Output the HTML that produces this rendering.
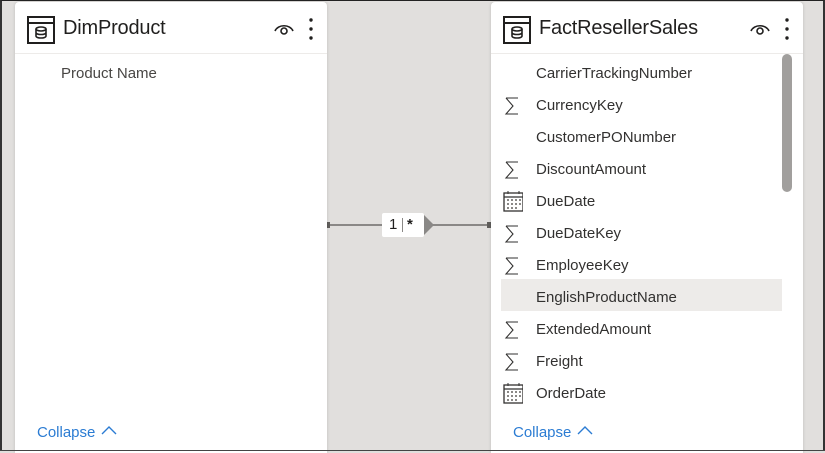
<!DOCTYPE html>
<html><head><meta charset="utf-8"><style>
*{margin:0;padding:0;box-sizing:border-box}
body{width:825px;height:451px;overflow:hidden;background:#e1dfdd;font-family:"Segoe UI","Liberation Sans",sans-serif;position:relative}
.frame{position:absolute;left:0;top:0;width:825px;height:451px;border:1px solid #222;border-bottom:0;border-left:2px solid #333;border-right:2px solid #333;pointer-events:none;z-index:10}
.card{position:absolute;top:2px;width:312px;height:451px;background:#fff;border-radius:4px 4px 0 0;box-shadow:0 0 3px rgba(0,0,0,.15)}
.hdr{height:52px;border-bottom:1px solid #edebe9;position:relative}
.title{position:absolute;left:48px;top:15px;font-size:20px;font-weight:normal;color:#201f1e;letter-spacing:-0.2px}
.ticon{position:absolute;left:12px;top:14px}
.eye{position:absolute;left:258px;top:19px}
.dots{position:absolute;left:293px;top:15px}
.row{position:absolute;height:32px;line-height:32px;font-size:15px;color:#323130}
.ic{position:absolute;left:-33px;top:0;width:20px;height:32px}
.collapse{position:absolute;left:22px;top:422px;font-size:15px;color:#2b7cd3}
.hl{position:absolute;left:10px;width:281px;height:32px;background:#edebe9}
.sb{position:absolute;left:291px;top:52px;width:10px;height:138px;background:#a19f9d;border-radius:5px}
</style></head><body>
<svg width="0" height="0" style="position:absolute"><defs>
<symbol id="tbl" viewBox="0 0 28 28"><rect x="1" y="1" width="26" height="26" fill="none" stroke="#201f1e" stroke-width="2"/><line x1="1" y1="7" x2="27" y2="7" stroke="#201f1e" stroke-width="2"/><ellipse cx="14" cy="13" rx="5" ry="2" fill="none" stroke="#201f1e" stroke-width="1.6"/><path d="M9 13v7c0 1.2 2.2 2 5 2s5-.8 5-2v-7M9 16.5c0 1.2 2.2 2 5 2s5-.8 5-2" fill="none" stroke="#201f1e" stroke-width="1.6"/></symbol>
<symbol id="sig" viewBox="0 0 20 32"><path d="M3 8h12M3 8l7 8-7 8h12" fill="none" stroke="#323130" stroke-width="1.1"/></symbol>
<symbol id="cal" viewBox="0 0 20 32"><rect x="1" y="7" width="19" height="18" fill="none" stroke="#323130" stroke-width="1.3"/><line x1="1" y1="11" x2="20" y2="11" stroke="#323130" stroke-width="1.3"/><line x1="5" y1="5" x2="5" y2="8" stroke="#323130"/><line x1="16" y1="5" x2="16" y2="8" stroke="#323130"/><g fill="#8a8886"><rect x="4" y="13" width="2" height="2"/><rect x="8" y="13" width="2" height="2"/><rect x="12" y="13" width="2" height="2"/><rect x="16" y="13" width="2" height="2"/><rect x="4" y="17" width="2" height="2"/><rect x="8" y="17" width="2" height="2"/><rect x="12" y="17" width="2" height="2"/><rect x="16" y="17" width="2" height="2"/><rect x="4" y="21" width="2" height="2"/><rect x="8" y="21" width="2" height="2"/><rect x="12" y="21" width="2" height="2"/></g></symbol>
<symbol id="eye" viewBox="0 0 22 16"><path d="M2 10c3-7 15-7 18 0" fill="none" stroke="#201f1e" stroke-width="1.6"/><circle cx="11" cy="10" r="3" fill="none" stroke="#201f1e" stroke-width="1.6"/></symbol>
<symbol id="dots" viewBox="0 0 6 24"><circle cx="3" cy="3" r="1.7" fill="#201f1e"/><circle cx="3" cy="12" r="1.7" fill="#201f1e"/><circle cx="3" cy="21" r="1.7" fill="#201f1e"/></symbol>
</defs></svg>

<div style="position:absolute;left:327px;top:224px;width:164px;height:2px;background:#8a8886"></div>
<div style="position:absolute;left:326px;top:222px;width:4px;height:6px;background:#605e5c"></div>
<div style="position:absolute;left:487px;top:222px;width:4px;height:6px;background:#605e5c"></div>
<div style="position:absolute;left:382px;top:213px;width:42px;height:24px;background:#fff;border-radius:2px;font-size:15px;line-height:24px;color:#201f1e"><span style="position:absolute;left:7px">1</span><span style="position:absolute;left:20px;top:5px;width:1px;height:14px;background:#8a8886"></span><span style="position:absolute;left:25px;font-weight:bold">*</span></div>
<div style="position:absolute;left:424px;top:215px;width:0;height:0;border-top:10px solid transparent;border-bottom:10px solid transparent;border-left:10px solid #8a8886"></div>

<div class="card" style="left:15px">
 <div class="hdr"><svg class="ticon" width="28" height="28"><use href="#tbl"/></svg><div class="title">DimProduct</div>
 <svg class="eye" width="22" height="16"><use href="#eye"/></svg><svg class="dots" width="6" height="24"><use href="#dots"/></svg></div>
 <div class="row" style="left:46px;top:56px;color:#484644">Product Name</div>
 <div class="collapse">Collapse <svg width="18" height="12" style="vertical-align:1px"><path d="M2 10l7-7 7 7" fill="none" stroke="#2b7cd3" stroke-width="1.4"/></svg></div>
</div>

<div class="card" style="left:491px;width:312px">
 <div class="hdr"><svg class="ticon" width="28" height="28"><use href="#tbl"/></svg><div class="title">FactResellerSales</div>
 <svg class="eye" width="22" height="16"><use href="#eye"/></svg><svg class="dots" width="6" height="24"><use href="#dots"/></svg></div>
 <div class="sb"></div>
 <div class="hl" style="top:277px"></div>
 <div class="row" style="left:45px;top:56px">CarrierTrackingNumber</div>
 <div class="row" style="left:45px;top:88px"><svg class="ic"><use href="#sig"/></svg>CurrencyKey</div>
 <div class="row" style="left:45px;top:120px">CustomerPONumber</div>
 <div class="row" style="left:45px;top:152px"><svg class="ic"><use href="#sig"/></svg>DiscountAmount</div>
 <div class="row" style="left:45px;top:184px"><svg class="ic"><use href="#cal"/></svg>DueDate</div>
 <div class="row" style="left:45px;top:216px"><svg class="ic"><use href="#sig"/></svg>DueDateKey</div>
 <div class="row" style="left:45px;top:248px"><svg class="ic"><use href="#sig"/></svg>EmployeeKey</div>
 <div class="row" style="left:45px;top:280px">EnglishProductName</div>
 <div class="row" style="left:45px;top:312px"><svg class="ic"><use href="#sig"/></svg>ExtendedAmount</div>
 <div class="row" style="left:45px;top:344px"><svg class="ic"><use href="#sig"/></svg>Freight</div>
 <div class="row" style="left:45px;top:376px"><svg class="ic"><use href="#cal"/></svg>OrderDate</div>
 <div class="collapse">Collapse <svg width="18" height="12" style="vertical-align:1px"><path d="M2 10l7-7 7 7" fill="none" stroke="#2b7cd3" stroke-width="1.4"/></svg></div>
</div>
<div style="position:absolute;left:0;top:450px;width:825px;height:1px;background:#444;z-index:11"></div>
<div class="frame"></div>
</body></html>
